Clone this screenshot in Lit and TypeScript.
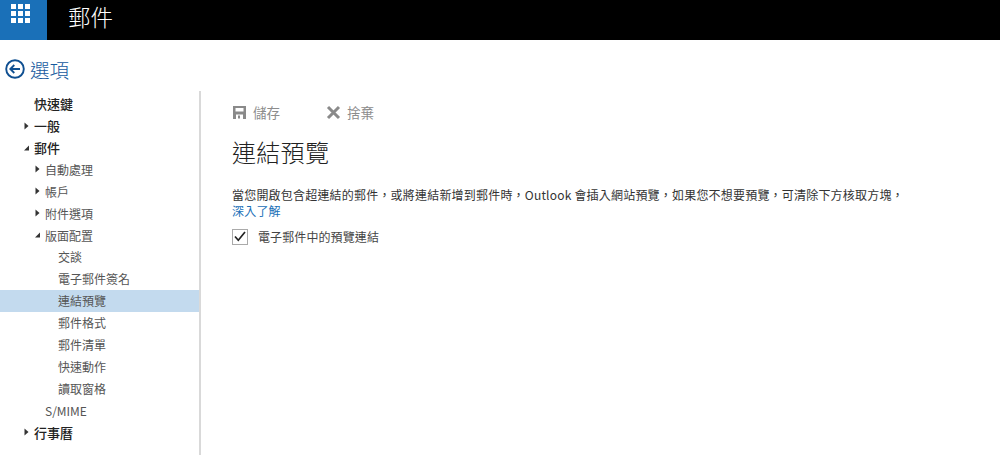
import { LitElement, html, svg, css } from 'lit';
import { customElement } from 'lit/decorators.js';

type NavItem = {
  label: string;
  level: 0 | 1 | 2;
  arrow?: 'right' | 'down';
  bold?: boolean;
  selected?: boolean;
};

const NAV: NavItem[] = [
  { label: '快速鍵', level: 0, bold: true },
  { label: '一般', level: 0, arrow: 'right', bold: true },
  { label: '郵件', level: 0, arrow: 'down', bold: true },
  { label: '自動處理', level: 1, arrow: 'right' },
  { label: '帳戶', level: 1, arrow: 'right' },
  { label: '附件選項', level: 1, arrow: 'right' },
  { label: '版面配置', level: 1, arrow: 'down' },
  { label: '交談', level: 2 },
  { label: '電子郵件簽名', level: 2 },
  { label: '連結預覽', level: 2, selected: true },
  { label: '郵件格式', level: 2 },
  { label: '郵件清單', level: 2 },
  { label: '快速動作', level: 2 },
  { label: '讀取窗格', level: 2 },
  { label: 'S/MIME', level: 1 },
  { label: '行事曆', level: 0, arrow: 'right', bold: true }
];

@customElement('app-root')
export class AppRoot extends LitElement {
  render() {
    return html`
      <header class="topbar">
        <div class="tile">${this.renderWaffle()}</div>
        <div class="app-name">郵件</div>
      </header>
      <div class="options-title">
        ${this.renderBack()}
        <span>選項</span>
      </div>
      <div class="body">
        <nav class="nav">${NAV.map((item) => this.renderItem(item))}</nav>
        <main class="content">
          <div class="toolbar">
            <span class="cmd save">${this.renderSave()}儲存</span>
            <span class="cmd">${this.renderClose()}捨棄</span>
          </div>
          <h1>連結預覽</h1>
          <p>當您開啟包含超連結的郵件，或將連結新增到郵件時，Outlook 會插入網站預覽，如果您不想要預覽，可清除下方核取方塊，<br /><a>深入了解</a></p>
          <label class="check">
            <span class="box">${this.renderCheck()}</span>
            電子郵件中的預覽連結
          </label>
        </main>
      </div>
    `;
  }

  renderItem(item: NavItem) {
    const cls = `row l${item.level} ${item.bold ? 'bold' : ''} ${item.selected ? 'selected' : ''}`;
    return html`<div class=${cls}>
      <span class="arrow">${item.arrow ? this.renderArrow(item.arrow) : ''}</span>
      <span>${item.label}</span>
    </div>`;
  }

  renderArrow(dir: 'right' | 'down') {
    return html`<svg width="7" height="8" viewBox="0 0 7 8">
      <path fill="#333" d=${dir === 'right' ? 'M1.5 .5L5.5 4L1.5 7.5z' : 'M6 1.5V6.5H1z'} />
    </svg>`;
  }

  renderWaffle() {
    const cells = [];
    for (const y of [0, 7, 14]) {
      for (const x of [0, 7, 14]) {
        cells.push(svg`<rect x=${x} y=${y} width="5" height="5" />`);
      }
    }
    return html`<svg width="19" height="19" viewBox="0 0 19 19" fill="#fff">${cells}</svg>`;
  }

  renderBack() {
    return html`<svg width="20" height="20" viewBox="0 0 20 20" fill="none" stroke="#0f4f91">
      <circle cx="10" cy="10" r="8.8" stroke-width="1.9" />
      <path stroke-width="1.8" d="M15 10H5.5M9.3 6L5.3 10L9.3 14" />
    </svg>`;
  }

  renderSave() {
    return html`<svg width="15" height="15" viewBox="0 0 15 15">
      <path fill="#8a8a8a" fill-rule="evenodd" d="M1 1H14V14H1zM3.5 3V6.5H11.5V3zM4 9.5V14H11V9.5z" />
      <rect x="6" y="10.5" width="2" height="3" fill="#8a8a8a" />
    </svg>`;
  }

  renderClose() {
    return html`<svg width="15" height="15" viewBox="0 0 15 15" fill="none" stroke="#8a8a8a" stroke-width="3">
      <path d="M2 2L13 13M13 2L2 13" />
    </svg>`;
  }

  renderCheck() {
    return html`<svg width="12" height="11" viewBox="0 0 12 11" fill="none" stroke="#222" stroke-width="1.7">
      <path d="M1 5.5L4.3 9.3L11 1" />
    </svg>`;
  }

  static styles = css`
    :host {
      display: block;
      width: 1000px;
      height: 455px;
      overflow: hidden;
      background: #fff;
      color: #333;
      font-family: 'Noto Sans CJK TC', 'Open Sans', sans-serif;
    }
    .topbar {
      display: flex;
      height: 40px;
      background: #000;
      color: #fff;
    }
    .tile {
      display: flex;
      align-items: center;
      justify-content: center;
      width: 47px;
      height: 40px;
      padding: 0 6px 13px 0;
      box-sizing: border-box;
      background: #1a70b8;
    }
    .app-name {
      margin: 4px 0 0 21px;
      font-size: 22.5px;
      line-height: 24px;
      font-weight: 300;
    }
    .options-title {
      display: flex;
      align-items: center;
      gap: 5px;
      height: 51px;
      padding: 7px 0 0 5px;
      box-sizing: border-box;
      color: #16599e;
      font-size: 19.5px;
      font-weight: 300;
    }
    .body {
      display: flex;
    }
    .nav {
      width: 201px;
      height: 364px;
      padding-top: 1.8px;
      box-sizing: border-box;
      border-right: 2px solid #d9d9d9;
      flex: none;
    }
    .row {
      display: flex;
      align-items: center;
      height: 21.9px;
      font-size: 12px;
      color: #555;
      white-space: nowrap;
    }
    .bold {
      font-size: 13px;
      font-weight: 500;
      color: #222;
    }
    .arrow {
      display: flex;
      width: 11px;
      flex: none;
    }
    .l0 {
      padding-left: 23px;
    }
    .l1 {
      padding-left: 34px;
    }
    .l2 {
      padding-left: 47px;
    }
    .selected {
      background: #c3daee;
    }
    .content {
      flex: 1;
      padding: 9px 0 0 31px;
    }
    .toolbar {
      display: flex;
      align-items: center;
      height: 24px;
      color: #8c8c8c;
      font-size: 13.5px;
    }
    .cmd {
      display: flex;
      align-items: center;
      gap: 6px;
    }
    .save {
      width: 94px;
    }
    h1 {
      margin: 11px 0 0;
      font-size: 24px;
      line-height: 34px;
      font-weight: 300;
      letter-spacing: 0.3px;
      color: #222;
    }
    p {
      margin: 18px 0 0;
      font-size: 12px;
      line-height: 15.5px;
      letter-spacing: 0.2px;
      color: #333;
      white-space: nowrap;
    }
    a {
      color: #1a70b8;
    }
    .check {
      display: flex;
      align-items: center;
      gap: 10px;
      margin-top: 10px;
      font-size: 12px;
      letter-spacing: 0.1px;
      color: #444;
    }
    .box {
      display: flex;
      align-items: center;
      justify-content: center;
      width: 16px;
      height: 16px;
      box-sizing: border-box;
      border: 1px solid #aaa;
      background: #fff;
    }
  `;
}
